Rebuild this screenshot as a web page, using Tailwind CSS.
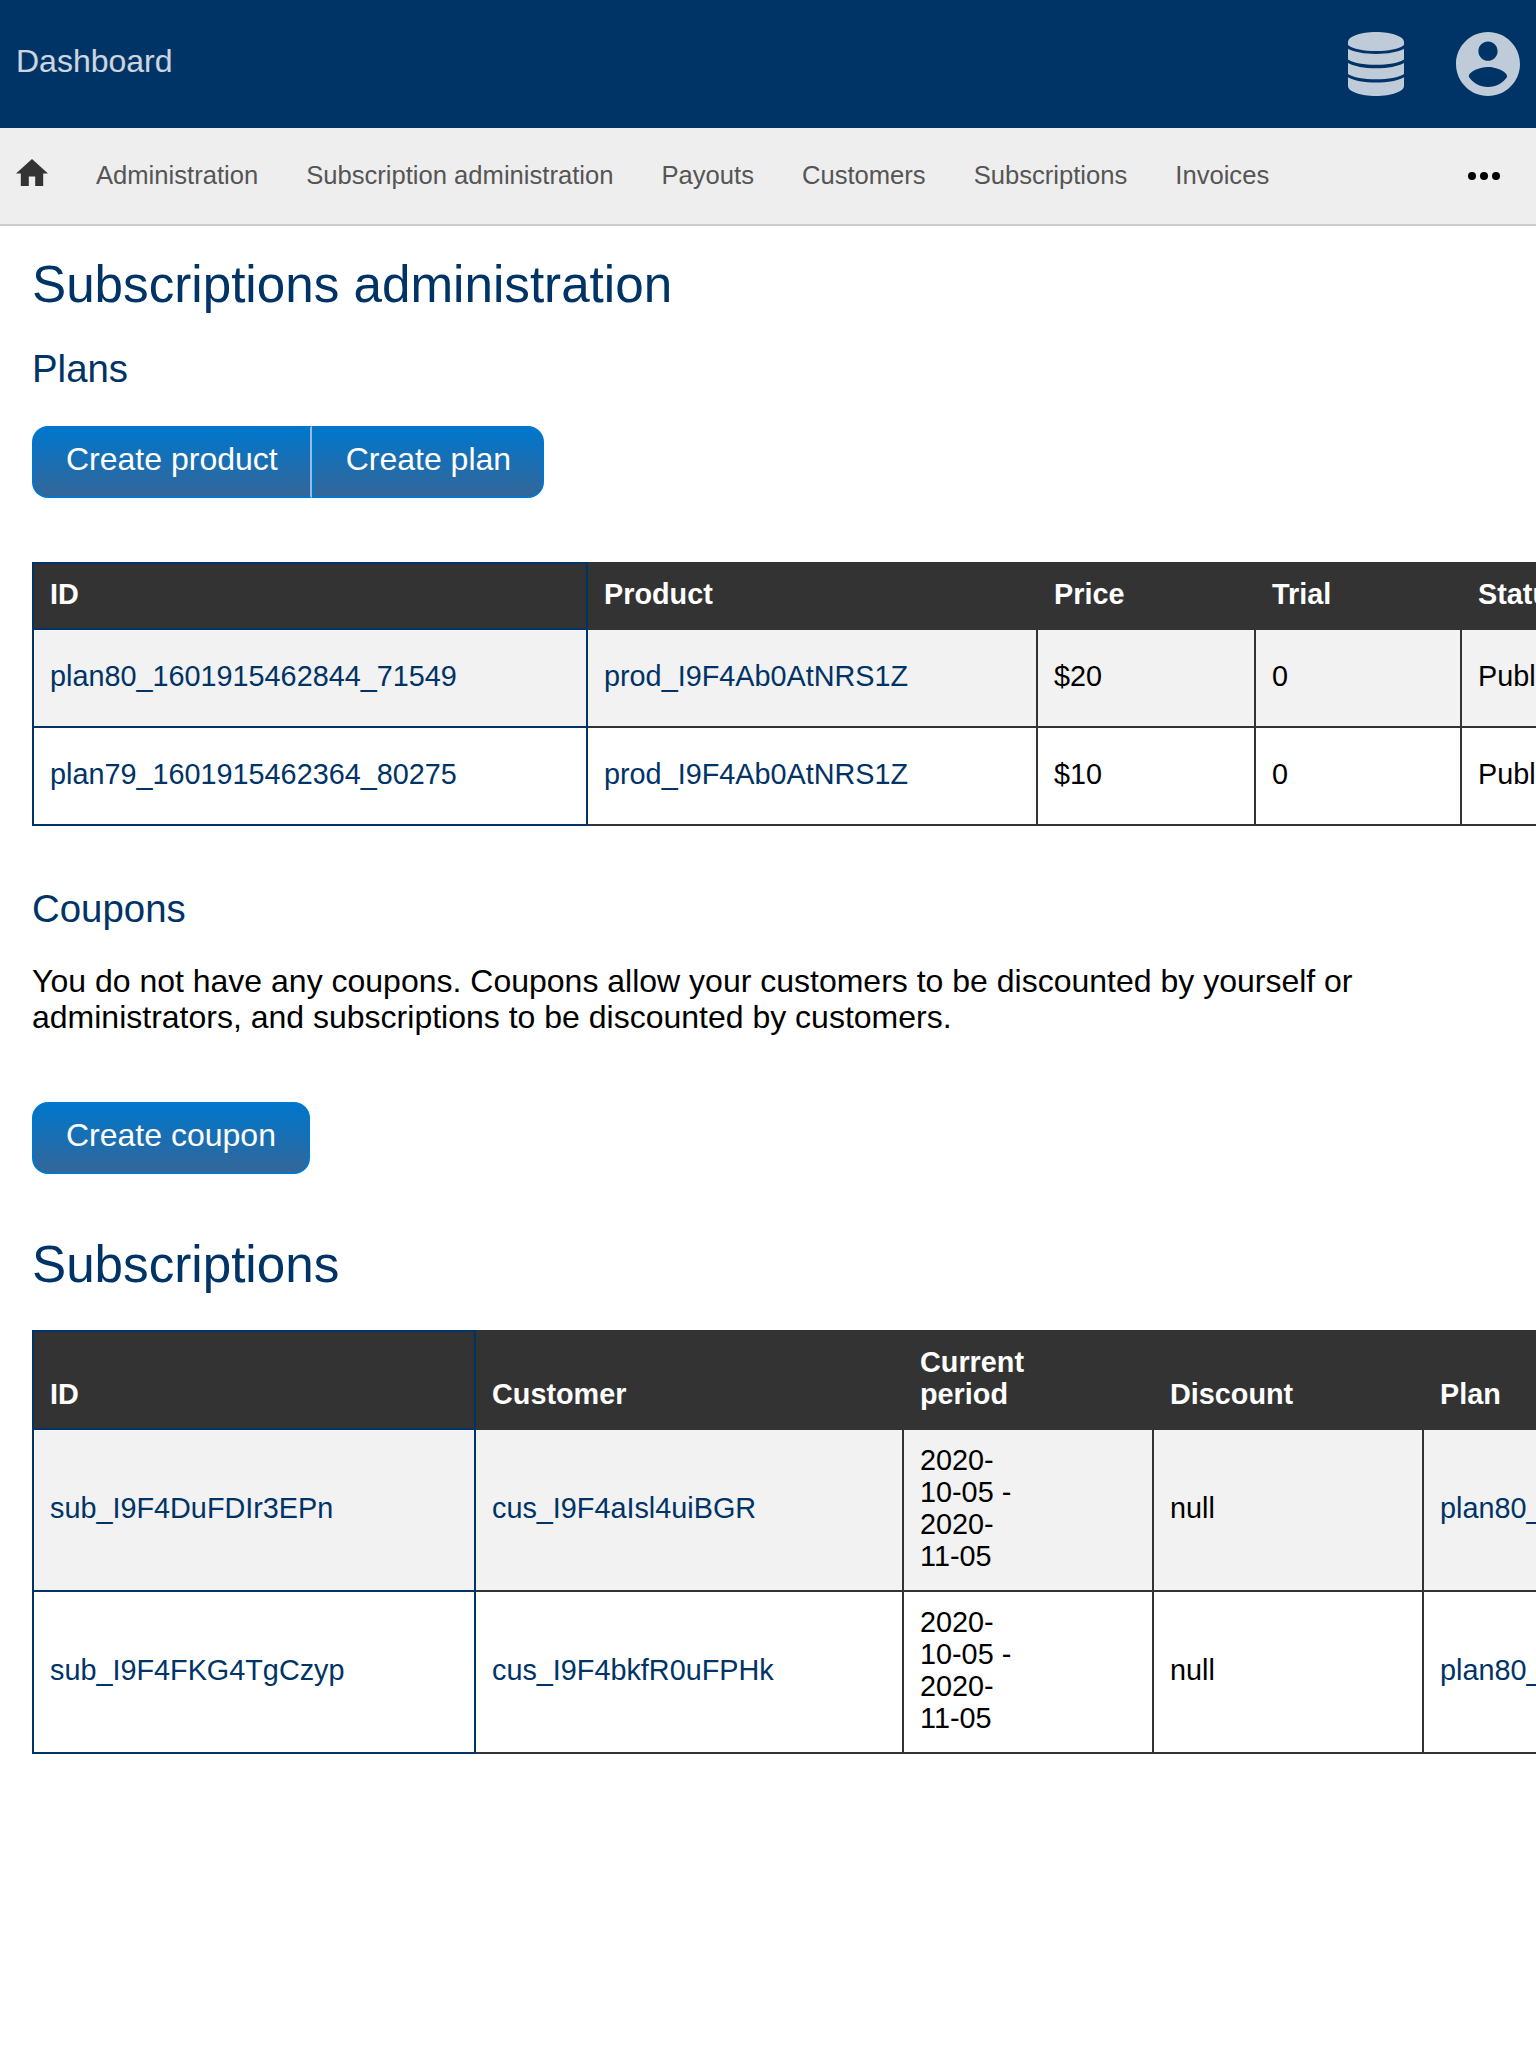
<!DOCTYPE html>
<html lang="en">
<head>
<meta charset="utf-8">
<title>Subscriptions administration</title>
<script src="https://cdn.jsdelivr.net/npm/@tailwindcss/browser@4"></script>
</head>
<body class="bg-white text-black font-['Liberation_Sans',Arial,sans-serif] overflow-hidden">
<div class="w-[1536px] h-[2048px] overflow-hidden">
  <header class="h-32 bg-[#003366] flex items-center justify-between px-4">
    <a class="text-[32px] leading-9 text-white/80 pb-1.5">Dashboard</a>
    <div class="flex items-center gap-[52px] text-white/75">
      <svg class="w-14 h-16" viewBox="0 0 56 64" fill="currentColor">
        <path d="M28 0C43.500 0 56 4.500 56 10v3C51 17 40 19 28 19S5 17 0 13v-3C0 4.500 12.500 0 28 0z"/>
        <path d="M0 16.800C6 20 16 22 28 22s22-2 28-5.200V27.500C51 31 40 32.800 28 32.800S5 31 0 27.500z"/>
        <path d="M0 31C6 34.300 16 36.300 28 36.300s22-2 28-5.300V42C51 45.500 40 47.300 28 47.300S5 45.500 0 42z"/>
        <path d="M0 45.300C6 48.800 16 50.600 28 50.600s22-1.800 28-5.300V54C56 59.500 43.500 64 28 64S0 59.500 0 54z"/>
      </svg>
      <svg class="size-16" viewBox="2 2 20 20" fill="currentColor"><path d="M12 2C6.480 2 2 6.480 2 12s4.480 10 10 10 10-4.480 10-10S17.520 2 12 2zm0 3c1.660 0 3 1.340 3 3s-1.340 3-3 3-3-1.340-3-3 1.340-3 3-3zm0 14.200c-2.500 0-4.710-1.280-6-3.220.03-1.990 4-3.080 6-3.080 1.990 0 5.970 1.090 6 3.080-1.290 1.940-3.500 3.220-6 3.220z"/></svg>
    </div>
  </header>
  <nav class="h-[98px] bg-[#eee] border-b-2 border-[#ccc] flex items-center pl-4 pr-9 text-[25.6px] leading-7 text-[#555]">
    <svg class="w-8 h-[27.2px] mb-[7px] mr-12" viewBox="2 3 20 17" fill="#333"><path d="M10 20v-6h4v6h5v-8h3L12 3 2 12h3v8z"/></svg>
    <div class="flex gap-12 flex-1 pb-0.5">
      <a>Administration</a><a>Subscription administration</a><a>Payouts</a><a>Customers</a><a>Subscriptions</a><a>Invoices</a>
    </div>
    <svg class="w-8 h-2" viewBox="0 0 32 8" fill="#000"><circle cx="4" cy="4" r="4"/><circle cx="16" cy="4" r="4"/><circle cx="28" cy="4" r="4"/></svg>
  </nav>
  <main class="pl-8">
    <h1 class="mt-[29px] text-[51.2px] leading-[60px] text-[#003366]">Subscriptions administration</h1>
    <h2 class="mt-8 text-[38.4px] leading-[44px] text-[#003366]">Plans</h2>
    <div class="mt-[35px] flex text-[32px] leading-9 text-white">
      <a class="h-[72px] px-8 pt-[13px] border-2 border-[#0077cc] border-r-[#99bbdd] rounded-l-2xl bg-[linear-gradient(to_bottom,#0077cc,#336699)]">Create product</a>
      <a class="w-[232.4px] whitespace-nowrap h-[72px] pl-8 pt-[13px] border-2 border-[#0077cc] rounded-r-2xl bg-[linear-gradient(to_bottom,#0077cc,#336699)]">Create plan</a>
    </div>
    <table class="mt-16 w-[1779px] table-fixed border-collapse text-[28.8px] leading-8 text-left">
      <colgroup><col class="w-[554px]"><col class="w-[450px]"><col class="w-[218px]"><col class="w-[206px]"><col class="w-[350px]"></colgroup>
      <thead class="bg-[#333] text-white align-bottom">
        <tr>
          <th class="border-2 border-[#003366] px-4 pt-[14px] pb-[18px]">ID</th>
          <th class="border-2 border-[#333] px-4 pt-[14px] pb-[18px]">Product</th>
          <th class="border-2 border-[#333] px-4 pt-[14px] pb-[18px]">Price</th>
          <th class="border-2 border-[#333] px-4 pt-[14px] pb-[18px]">Trial</th>
          <th class="border-2 border-[#333] px-4 pt-[14px] pb-[18px]">Status</th>
        </tr>
      </thead>
      <tbody>
        <tr class="bg-[#f2f2f2]">
          <td class="border-2 border-[#003366] px-4 pt-[30px] pb-[34px] text-[#003366]">plan80_1601915462844_71549</td>
          <td class="border-2 border-[#333] px-4 pt-[30px] pb-[34px] text-[#003366]">prod_I9F4Ab0AtNRS1Z</td>
          <td class="border-2 border-[#333] px-4 pt-[30px] pb-[34px]">$20</td>
          <td class="border-2 border-[#333] px-4 pt-[30px] pb-[34px]">0</td>
          <td class="border-2 border-[#333] px-4 pt-[30px] pb-[34px]">Published</td>
        </tr>
        <tr>
          <td class="border-2 border-[#003366] px-4 pt-[30px] pb-[34px] text-[#003366]">plan79_1601915462364_80275</td>
          <td class="border-2 border-[#333] px-4 pt-[30px] pb-[34px] text-[#003366]">prod_I9F4Ab0AtNRS1Z</td>
          <td class="border-2 border-[#333] px-4 pt-[30px] pb-[34px]">$10</td>
          <td class="border-2 border-[#333] px-4 pt-[30px] pb-[34px]">0</td>
          <td class="border-2 border-[#333] px-4 pt-[30px] pb-[34px]">Published</td>
        </tr>
      </tbody>
    </table>
    <h2 class="mt-[61px] text-[38.4px] leading-[44px] text-[#003366]">Coupons</h2>
    <p class="mt-8 w-[1472px] text-[32px] leading-9">You do not have any coupons. Coupons allow your customers to be discounted by yourself or<br>administrators, and subscriptions to be discounted by customers.</p>
    <div class="mt-[67px] flex text-[32px] leading-9 text-white">
      <a class="h-[72px] px-8 pt-[13px] border-2 border-[#0077cc] rounded-2xl bg-[linear-gradient(to_bottom,#0077cc,#336699)]">Create coupon</a>
    </div>
    <h1 class="mt-[61px] text-[51.2px] leading-[60px] text-[#003366]">Subscriptions</h1>
    <table class="mt-[35px] w-[1841px] table-fixed border-collapse text-[28.8px] leading-8 text-left">
      <colgroup><col class="w-[442px]"><col class="w-[428px]"><col class="w-[250px]"><col class="w-[270px]"><col class="w-[450px]"></colgroup>
      <thead class="bg-[#333] text-white">
        <tr>
          <th class="border-2 border-[#003366] px-4 pt-[14px] pb-[18px] align-bottom">ID</th>
          <th class="border-2 border-[#333] px-4 pt-[14px] pb-[18px] align-bottom">Customer</th>
          <th class="border-2 border-[#333] px-4 pt-[14px] pb-[18px] align-bottom">Current<br>period</th>
          <th class="border-2 border-[#333] px-4 pt-[14px] pb-[18px] align-bottom">Discount</th>
          <th class="border-2 border-[#333] px-4 pt-[14px] pb-[18px] align-bottom">Plan</th>
        </tr>
      </thead>
      <tbody>
        <tr class="bg-[#f2f2f2]">
          <td class="border-2 border-[#003366] px-4 pt-[14px] pb-[18px] text-[#003366]">sub_I9F4DuFDIr3EPn</td>
          <td class="border-2 border-[#333] px-4 pt-[14px] pb-[18px] text-[#003366]">cus_I9F4aIsl4uiBGR</td>
          <td class="border-2 border-[#333] px-4 pt-[14px] pb-[18px]">2020-<br>10-05 -<br>2020-<br>11-05</td>
          <td class="border-2 border-[#333] px-4 pt-[14px] pb-[18px]">null</td>
          <td class="border-2 border-[#333] px-4 pt-[14px] pb-[18px] text-[#003366]">plan80_1601915462844_71549</td>
        </tr>
        <tr>
          <td class="border-2 border-[#003366] px-4 pt-[14px] pb-[18px] text-[#003366]">sub_I9F4FKG4TgCzyp</td>
          <td class="border-2 border-[#333] px-4 pt-[14px] pb-[18px] text-[#003366]">cus_I9F4bkfR0uFPHk</td>
          <td class="border-2 border-[#333] px-4 pt-[14px] pb-[18px]">2020-<br>10-05 -<br>2020-<br>11-05</td>
          <td class="border-2 border-[#333] px-4 pt-[14px] pb-[18px]">null</td>
          <td class="border-2 border-[#333] px-4 pt-[14px] pb-[18px] text-[#003366]">plan80_1601915462844_71549</td>
        </tr>
      </tbody>
    </table>
  </main>
</div>
</body>
</html>
